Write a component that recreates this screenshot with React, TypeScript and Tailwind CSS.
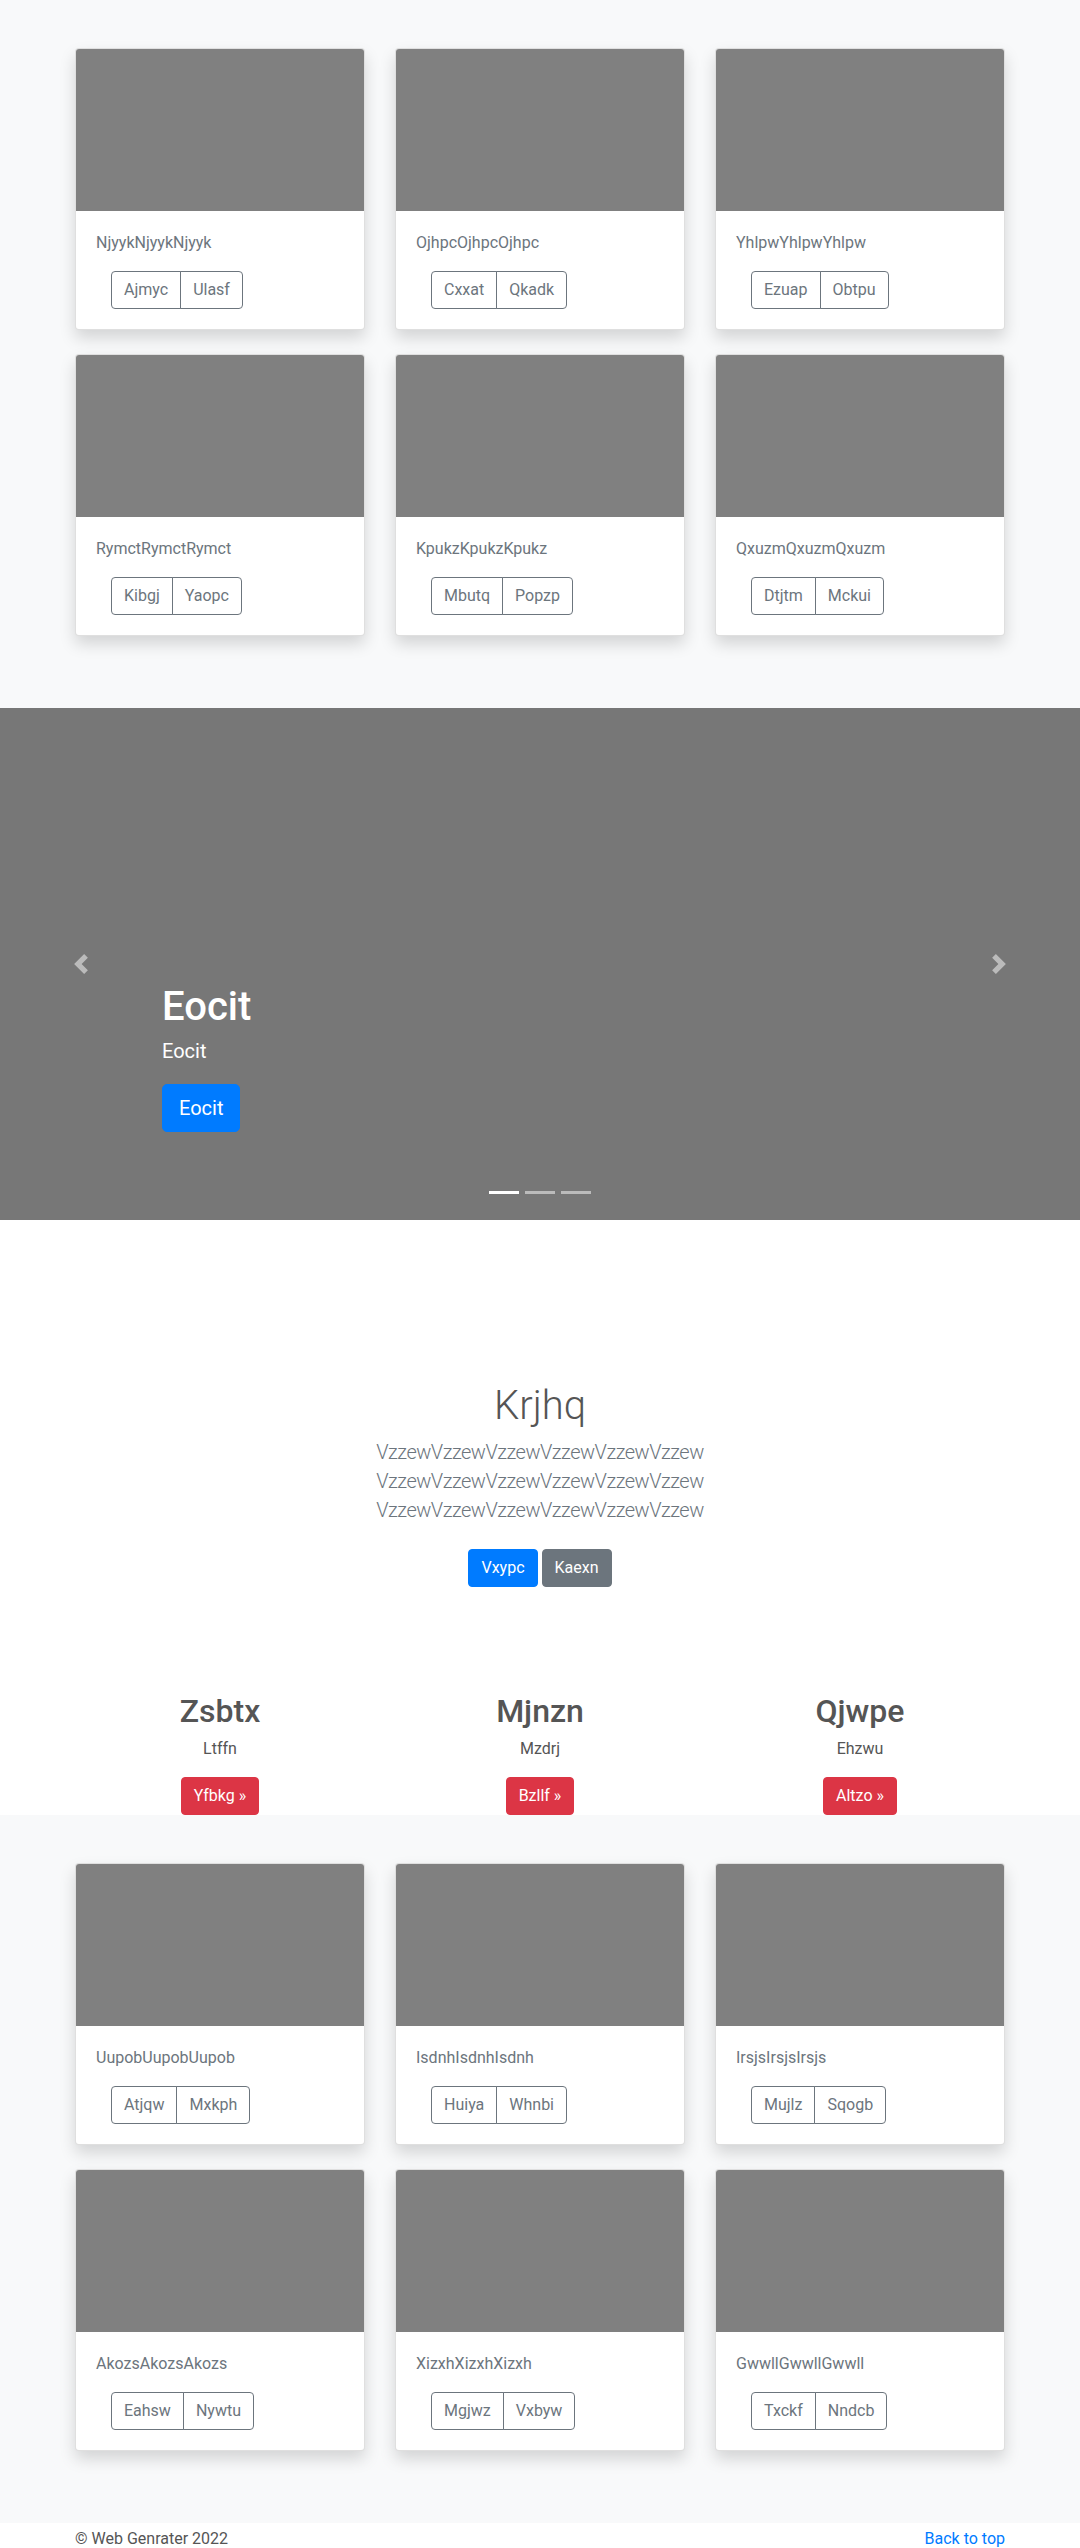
import React from 'react'

type CardData = { title: string; a: string; b: string }

const topCards: CardData[] = [
  { title: 'NjyykNjyykNjyyk', a: 'Ajmyc', b: 'Ulasf' },
  { title: 'OjhpcOjhpcOjhpc', a: 'Cxxat', b: 'Qkadk' },
  { title: 'YhlpwYhlpwYhlpw', a: 'Ezuap', b: 'Obtpu' },
  { title: 'RymctRymctRymct', a: 'Kibgj', b: 'Yaopc' },
  { title: 'KpukzKpukzKpukz', a: 'Mbutq', b: 'Popzp' },
  { title: 'QxuzmQxuzmQxuzm', a: 'Dtjtm', b: 'Mckui' },
]

const bottomCards: CardData[] = [
  { title: 'UupobUupobUupob', a: 'Atjqw', b: 'Mxkph' },
  { title: 'IsdnhIsdnhIsdnh', a: 'Huiya', b: 'Whnbi' },
  { title: 'IrsjsIrsjsIrsjs', a: 'Mujlz', b: 'Sqogb' },
  { title: 'AkozsAkozsAkozs', a: 'Eahsw', b: 'Nywtu' },
  { title: 'XizxhXizxhXizxh', a: 'Mgjwz', b: 'Vxbyw' },
  { title: 'GwwllGwwllGwwll', a: 'Txckf', b: 'Nndcb' },
]

const features = [
  { title: 'Zsbtx', text: 'Ltffn', btn: 'Yfbkg' },
  { title: 'Mjnzn', text: 'Mzdrj', btn: 'Bzllf' },
  { title: 'Qjwpe', text: 'Ehzwu', btn: 'Altzo' },
]

function Card({ card }: { card: CardData }) {
  return (
    <div className="bg-white border border-black/[.125] rounded-[4px] overflow-hidden shadow-[0_8px_16px_rgba(0,0,0,0.15)] mb-6">
      <div className="h-[162px] bg-[#808080]" />
      <div className="p-5">
        <p className="text-[16px] leading-6 text-[#6c757d] mb-4">{card.title}</p>
        <div className="flex ml-[15px]">
          <button className="h-[38px] px-3 text-[16px] text-[#6c757d] border border-[#6c757d] rounded-l-[4px]">
            {card.a}
          </button>
          <button className="h-[38px] px-3 text-[16px] text-[#6c757d] border border-[#6c757d] -ml-px rounded-r-[4px]">
            {card.b}
          </button>
        </div>
      </div>
    </div>
  )
}

function Album({ cards }: { cards: CardData[] }) {
  return (
    <section className="bg-[#f8f9fa] pt-12 pb-12">
      <div className="w-[960px] mx-auto px-[15px] grid grid-cols-3 gap-x-[30px]">
        {cards.map((c) => (
          <Card key={c.title} card={c} />
        ))}
      </div>
    </section>
  )
}

function Carousel() {
  return (
    <section className="relative h-[512px] bg-[#777777]">
      <div className="absolute left-0 top-0 bottom-0 w-[15%] flex items-center justify-center opacity-50">
        <svg width="20" height="20" viewBox="0 0 8 8" fill="#fff">
          <path d="M5.25 0l-4 4 4 4 1.5-1.5L4.25 4l2.5-2.5L5.25 0z" />
        </svg>
      </div>
      <div className="absolute right-0 top-0 bottom-0 w-[15%] flex items-center justify-center opacity-50">
        <svg width="20" height="20" viewBox="0 0 8 8" fill="#fff">
          <path d="M2.75 0l-1.5 1.5L3.75 4l-2.5 2.5L2.75 8l4-4-4-4z" />
        </svg>
      </div>

      {/* Caption */}
      <div className="absolute left-[162px] top-[275px] text-white">
        <h1 className="text-[40px] leading-[48px] font-medium mb-2">Eocit</h1>
        <p className="text-[20px] leading-[24px] mb-[21px]">Eocit</p>
        <button className="h-12 px-4 text-[20px] leading-[30px] bg-[#007bff] border border-[#007bff] rounded-[5px] text-white">
          Eocit
        </button>
      </div>

      {/* Indicators */}
      <div className="absolute left-0 right-0 top-[483px] flex justify-center">
        <span className="w-[30px] h-[3px] mx-[3px] bg-white" />
        <span className="w-[30px] h-[3px] mx-[3px] bg-white/50" />
        <span className="w-[30px] h-[3px] mx-[3px] bg-white/50" />
      </div>
    </section>
  )
}

function Intro() {
  return (
    <section className="bg-white pt-[162px]">
      <div className="text-center">
        <h1 className="text-[40px] leading-[48px] font-light text-[#555] mb-2">Krjhq</h1>
        <p className="text-[20px] leading-[29px] font-light tracking-[-0.5px] text-[#6c757d] mb-4">
          VzzewVzzewVzzewVzzewVzzewVzzew
          <br />
          VzzewVzzewVzzewVzzewVzzewVzzew
          <br />
          VzzewVzzewVzzewVzzewVzzewVzzew
        </p>
        <div className="flex justify-center gap-1 py-2">
          <button className="h-[38px] px-3 text-[16px] text-white bg-[#007bff] border border-[#007bff] rounded-[4px]">
            Vxypc
          </button>
          <button className="h-[38px] px-3 text-[16px] text-white bg-[#6c757d] border border-[#6c757d] rounded-[4px]">
            Kaexn
          </button>
        </div>
      </div>

      <div className="w-[960px] mx-auto mt-[98px] grid grid-cols-3">
        {features.map((f) => (
          <div key={f.title} className="px-[15px] text-center">
            <h2 className="text-[32px] leading-[36px] font-medium text-[#555] mb-2">{f.title}</h2>
            <p className="text-[16px] leading-6 text-[#555] mb-4">{f.text}</p>
            <button className="h-[38px] px-3 text-[16px] text-white bg-[#dc3545] border border-[#dc3545] rounded-[4px]">
              {f.btn} &raquo;
            </button>
          </div>
        ))}
      </div>
    </section>
  )
}

export default function App() {
  return (
    <div className="min-h-screen bg-white font-[Roboto,'Liberation_Sans',sans-serif]">
      <Album cards={topCards} />
      <Carousel />
      <Intro />
      <Album cards={bottomCards} />
      <footer className="bg-white pt-[4px] pb-12">
        <div className="w-[960px] mx-auto px-[15px] flex justify-between text-[16px] leading-6">
          <p className="text-[#555]">&copy; Web Genrater 2022</p>
          <a href="#" className="text-[#007bff]">
            Back to top
          </a>
        </div>
      </footer>
    </div>
  )
}
